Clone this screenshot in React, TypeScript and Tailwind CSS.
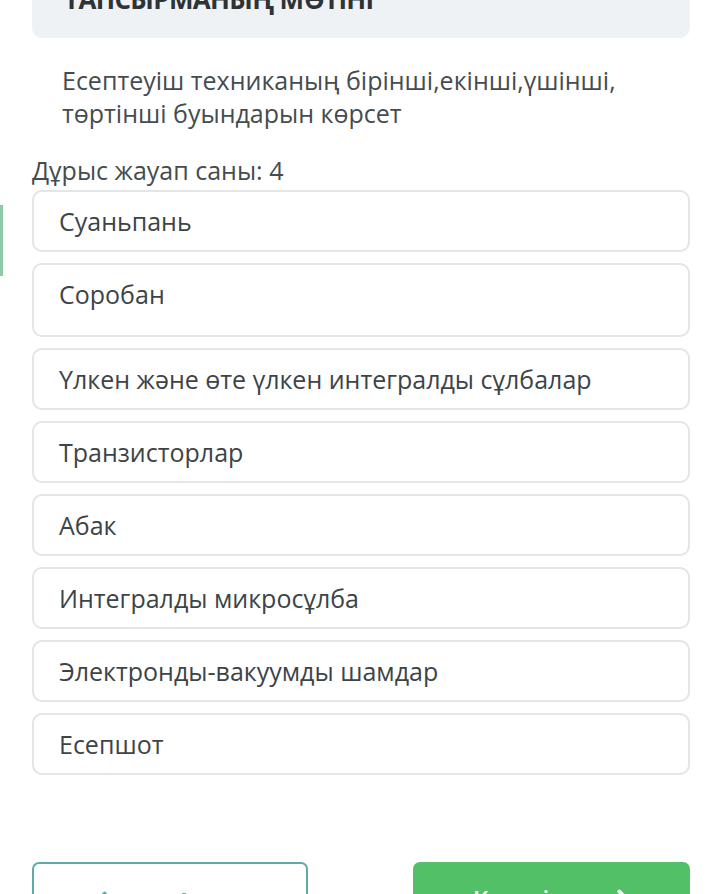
import React from "react";
import { ChevronLeft, ChevronRight } from "lucide-react";

const answers = [
  { text: "Суаньпань", tall: false },
  { text: "Соробан", tall: true },
  { text: "Үлкен және өте үлкен интегралды сұлбалар", tall: false },
  { text: "Транзисторлар", tall: false },
  { text: "Абак", tall: false },
  { text: "Интегралды микросұлба", tall: false },
  { text: "Электронды-вакуумды шамдар", tall: false },
  { text: "Есепшот", tall: false },
];

const App: React.FC = () => {
  return (
    <div
      className="relative w-[720px] h-[894px] overflow-hidden bg-white text-[#3d4447]"
      style={{ fontFamily: '"Open Sans", "DejaVu Sans", sans-serif' }}
    >
      {/* green marker on the left edge */}
      <div className="absolute left-0 top-[205px] w-[3px] h-[71px] bg-[#8cc9a4]" />

      <div className="pl-8 pr-[30px]">
        {/* task header, scrolled up */}
        <div className="-mt-[30px] h-[68px] rounded-b-[10px] bg-[#eff2f4] pl-[32px] pt-[13px]">
          <span className="text-[26px] font-bold leading-[32px] text-[#2e3436] tracking-tight">
            ТАПСЫРМАНЫҢ МӘТІНІ
          </span>
        </div>

        {/* question */}
        <p className="mt-[26px] pl-[30px] text-[25px] leading-[33px] text-[#454c50]">
          Есептеуіш техниканың бірінші,екінші,үшінші, төртінші буындарын көрсет
        </p>

        <p className="mt-[25px] text-[25px] leading-[30px] text-[#454c50]">
          Дұрыс жауап саны: 4
        </p>

        {/* answer options */}
        <div className="mt-[5px] flex flex-col gap-[11px]">
          {answers.map((a) => (
            <div
              key={a.text}
              className={
                a.tall
                  ? "h-[74px] rounded-[10px] border-2 border-[#e3e6e6] pl-[25px] pt-[12px]"
                  : "h-[62px] rounded-[10px] border-2 border-[#e3e6e6] pl-[25px] pt-[12px]"
              }
            >
              <span className="text-[25px] leading-[34px] text-[#3d4447]">
                {a.text}
              </span>
            </div>
          ))}
        </div>

        {/* navigation buttons */}
        <div className="mt-[87px] flex justify-between">
          <div className="w-[276px] h-[60px] rounded-[7px] border-2 border-[#5fa9a6] bg-white flex items-start pt-[22px] pl-[52px] gap-[60px] text-[#5fa9a6]">
            <ChevronLeft className="w-[30px] h-[30px]" strokeWidth={3} />
            <span className="text-[24px] font-semibold leading-[30px]">Артқа</span>
          </div>
          <div className="w-[277px] h-[60px] rounded-[7px] bg-[#52c066] flex items-start justify-between pt-[22px] pl-[60px] pr-[52px] text-white">
            <span className="text-[24px] font-semibold leading-[30px]">Келесі</span>
            <ChevronRight className="w-[30px] h-[30px]" strokeWidth={3} />
          </div>
        </div>
      </div>
    </div>
  );
};

export default App;
